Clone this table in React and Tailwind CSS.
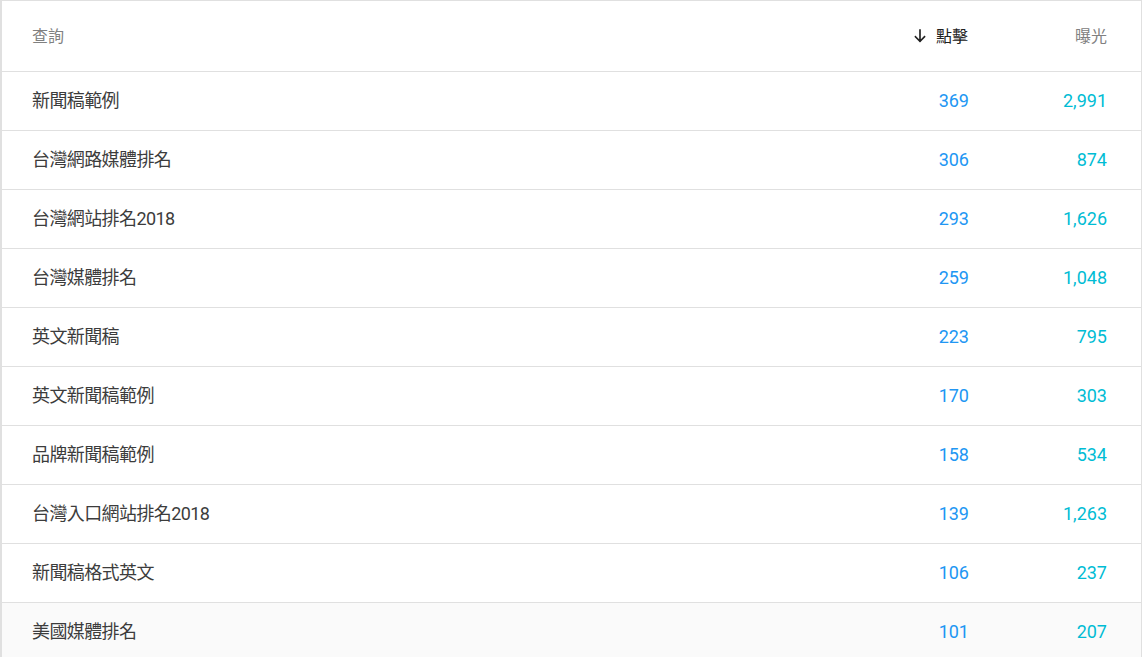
const rows = [
  { query: '新聞稿範例', clicks: '369', impressions: '2,991' },
  { query: '台灣網路媒體排名', clicks: '306', impressions: '874' },
  { query: '台灣網站排名2018', clicks: '293', impressions: '1,626' },
  { query: '台灣媒體排名', clicks: '259', impressions: '1,048' },
  { query: '英文新聞稿', clicks: '223', impressions: '795' },
  { query: '英文新聞稿範例', clicks: '170', impressions: '303' },
  { query: '品牌新聞稿範例', clicks: '158', impressions: '534' },
  { query: '台灣入口網站排名2018', clicks: '139', impressions: '1,263' },
  { query: '新聞稿格式英文', clicks: '106', impressions: '237' },
  { query: '美國媒體排名', clicks: '101', impressions: '207', hover: true }
]

const font = { fontFamily: 'Roboto, "Noto Sans CJK TC", sans-serif' }

const App = () => {
  return (
    <div className="h-[657px] w-[1143px] overflow-hidden bg-white" style={font}>
      <div className="border-l-2 border-r border-t border-[#e0e0e0] mr-[1px] h-full">
        {/* Header */}
        <div className="flex items-center h-[71px] border-b border-[#e0e0e0] pl-[30px] pr-[34px] pt-[2px] text-[16px]">
          <div className="flex-1 text-[#808080]">查詢</div>
          <div className="w-[200px] flex items-center justify-end text-[#212121]">
            <svg className="w-[18px] h-[18px] mr-[7px] -mt-[2px]" viewBox="0 0 24 24" fill="none" stroke="currentColor">
              <path strokeWidth={2.2} strokeLinecap="square" d="M12 4v15M6 13l6 6 6-6" />
            </svg>
            點擊
          </div>
          <div className="w-[139px] text-right text-[#808080]">曝光</div>
        </div>

        {/* Rows */}
        {rows.map((row, i) => (
          <div
            key={i}
            className={`flex items-center h-[59px] border-b border-[#e0e0e0] pl-[30px] pr-[34px] pb-[2px] text-[18px] ${
              row.hover ? 'bg-[#fafafa]' : 'bg-white'
            }`}
          >
            <div className="flex-1 text-[#3c3c3c] tracking-[-0.6px]">{row.query}</div>
            <div className="w-[201px] text-right text-[#2196f3]">{row.clicks}</div>
            <div className="w-[138px] text-right text-[#00bcd4]">{row.impressions}</div>
          </div>
        ))}
      </div>
    </div>
  )
}

export default App
